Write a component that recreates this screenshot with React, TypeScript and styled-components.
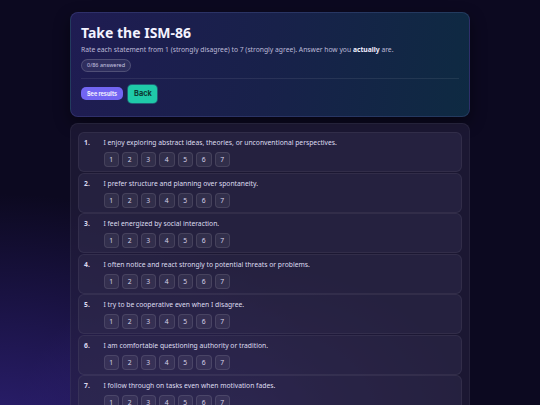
import React from "react";
import styled, { createGlobalStyle } from "styled-components";

const Global = createGlobalStyle`
  html, body { margin: 0; padding: 0; }
  body {
    min-height: 405px;
    background:
      radial-gradient(ellipse 460px 320px at 0% 100%, rgba(62, 44, 160, 0.6), rgba(62, 44, 160, 0) 72%),
      radial-gradient(ellipse 320px 220px at 45% 98%, rgba(70, 50, 160, 0.4), rgba(70, 50, 160, 0) 70%),
      #0c0920;
    font-family: "Noto Sans", "Open Sans", sans-serif;
    color: #e8e6f5;
    overflow: hidden;
  }
`;

const Page = styled.main`
  width: 400px;
  margin: 12px auto 0;
  display: flex;
  flex-direction: column;
  gap: 6px;
`;

const HeaderCard = styled.section`
  box-sizing: border-box;
  height: 105px;
  padding: 12px 10px 10px;
  border-radius: 8px;
  border: 1px solid rgba(130, 140, 220, 0.18);
  background: linear-gradient(100deg, #1f1c52 0%, #18214a 50%, #0e2a42 100%);
  box-shadow: 0 6px 16px rgba(0, 0, 0, 0.45);
  display: flex;
  flex-direction: column;
`;

const Title = styled.h1`
  margin: 0;
  font-size: 14px;
  line-height: 16.8px;
  font-weight: 700;
  color: #f3f2ff;
`;

const Subtitle = styled.p`
  margin: 3px 0 0;
  font-size: 6.75px;
  line-height: 9px;
  color: #bdbad8;
  b { color: #f1f0ff; font-weight: 700; }
`;

const Pill = styled.span`
  align-self: flex-start;
  margin-top: 5px;
  box-sizing: border-box;
  height: 13px;
  padding: 0 5px;
  display: inline-flex;
  align-items: center;
  border-radius: 999px;
  background: rgba(255, 255, 255, 0.08);
  border: 1px solid rgba(255, 255, 255, 0.16);
  font-size: 5.5px;
  color: #c9c6e0;
`;

const Divider = styled.hr`
  width: 100%;
  margin: 6px 0 0;
  border: 0;
  height: 1px;
  background: rgba(255, 255, 255, 0.08);
`;

const Actions = styled.div`
  margin-top: 6px;
  display: flex;
  align-items: center;
  gap: 5px;
`;

const Button = styled.button<{ $variant: "primary" | "teal" }>`
  box-sizing: border-box;
  border: 0;
  cursor: pointer;
  font-family: "Inter", "Roboto", sans-serif;
  font-weight: 700;
  ${(p) =>
    p.$variant === "primary"
      ? `
    height: 13px;
    width: 42px;
    border-radius: 5px;
    background: #7265f2;
    color: #f4f2ff;
    font-size: 5.5px;
  `
      : `
    height: 18px;
    width: 29px;
    border-radius: 4px;
    background: #1fcaa9;
    color: #0c3a33;
    font-size: 7.4px;
    box-shadow: 0 0 0 1px rgba(40, 220, 190, 0.35);
  `}
`;

const ListCard = styled.section`
  box-sizing: border-box;
  padding: 8px 7px 8px;
  border-radius: 8px;
  border: 1px solid rgba(255, 255, 255, 0.05);
  background: rgba(40, 34, 66, 0.55);
  display: flex;
  flex-direction: column;
  gap: 0.5px;
`;

const Item = styled.article`
  box-sizing: border-box;
  height: 40px;
  padding: 5px;
  border-radius: 6px;
  border: 1px solid rgba(255, 255, 255, 0.06);
  background: rgba(52, 46, 80, 0.45);
  display: grid;
  grid-template-columns: 19.5px 1fr;
  row-gap: 5px;
`;

const Num = styled.span`
  font-size: 6.75px;
  line-height: 9px;
  font-weight: 700;
  color: #dcdaf0;
`;

const Question = styled.p`
  margin: 0;
  font-size: 6.75px;
  line-height: 9px;
  color: #dedcef;
`;

const Scale = styled.div`
  grid-column: 2;
  display: flex;
  gap: 3px;
`;

const Choice = styled.button`
  box-sizing: border-box;
  width: 15.5px;
  height: 15.3px;
  padding: 0;
  border-radius: 4px;
  border: 1px solid rgba(255, 255, 255, 0.1);
  background: rgba(255, 255, 255, 0.06);
  color: #d6d3ea;
  font-family: "Noto Sans", sans-serif;
  font-size: 6.75px;
  display: flex;
  align-items: center;
  justify-content: center;
`;

const questions = [
  "I enjoy exploring abstract ideas, theories, or unconventional perspectives.",
  "I prefer structure and planning over spontaneity.",
  "I feel energized by social interaction.",
  "I often notice and react strongly to potential threats or problems.",
  "I try to be cooperative even when I disagree.",
  "I am comfortable questioning authority or tradition.",
  "I follow through on tasks even when motivation fades.",
];

export default function App() {
  return (
    <>
      <Global />
      <Page>
        <HeaderCard>
          <Title>Take the ISM-86</Title>
          <Subtitle>
            Rate each statement from 1 (strongly disagree) to 7 (strongly agree). Answer how you <b>actually</b> are.
          </Subtitle>
          <Pill>0/86 answered</Pill>
          <Divider />
          <Actions>
            <Button $variant="primary">See results</Button>
            <Button $variant="teal">Back</Button>
          </Actions>
        </HeaderCard>
        <ListCard>
          {questions.map((q, i) => (
            <Item key={i}>
              <Num>{i + 1}.</Num>
              <Question>{q}</Question>
              <Scale>
                {[1, 2, 3, 4, 5, 6, 7].map((n) => (
                  <Choice key={n}>{n}</Choice>
                ))}
              </Scale>
            </Item>
          ))}
        </ListCard>
      </Page>
    </>
  );
}
